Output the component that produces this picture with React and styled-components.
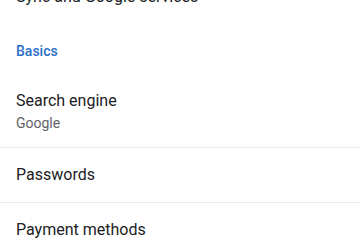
import React from "react";
import styled, {createGlobalStyle} from "styled-components";

const GlobalStyle = createGlobalStyle`
  html, body {
    margin: 0;
    padding: 0;
    background: #ffffff;
  }
  body {
    font-family: Roboto, "Noto Sans", "Liberation Sans", sans-serif;
    -webkit-font-smoothing: antialiased;
  }
`

const Screen = styled.div`
  width: 360px;
  height: 240px;
  overflow: hidden;
  background: #ffffff;
`

// the list is scrolled a little, so the first row is half off screen
const List = styled.div`
  display: flex;
  flex-direction: column;
  margin-top: ${props => -props.scroll}px;
`

const Category = styled.div`
  padding: 18px 16px 13px;
  font-size: 14px;
  line-height: 20px;
  font-weight: 500;
  color: #2b6fc6;
`

const Row = styled.div`
  display: flex;
  flex-direction: column;
  padding: 15px 16px ${props => props.bottom || 14}px;
  border-bottom: ${props => props.divider ? "1px solid #e8e8e8" : "none"};
`

const Title = styled.div`
  font-size: 16px;
  line-height: 24px;
  color: #202124;
`

const Summary = styled.div`
  font-size: 14px;
  line-height: 20px;
  color: #5f6368;
`

const items = [
	{title: "Search engine", summary: "Google"},
	{title: "Passwords", bottom: 15},
	{title: "Payment methods"},
	{title: "Addresses and more"},
]

const App = () => {
	return (
		<Screen>
			<GlobalStyle/>
			<List scroll={30}>
				<Row>
					<Title>Sync and Google services</Title>
				</Row>
				<Category>Basics</Category>
				{items.map(el => (
					<Row key={el.title} bottom={el.bottom} divider>
						<Title>{el.title}</Title>
						{el.summary && <Summary>{el.summary}</Summary>}
					</Row>
				))}
			</List>
		</Screen>
	)
}

export default App
